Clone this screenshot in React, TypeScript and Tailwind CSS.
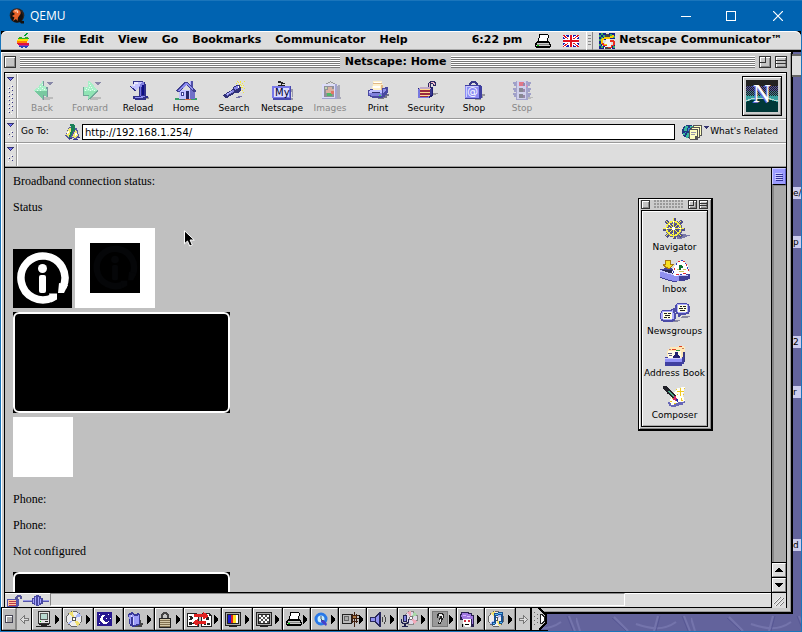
import type { ReactNode } from 'react';
import clsx from 'clsx';

const FACE = 'font-["DejaVu_Sans",sans-serif]';
const RAISED = 'border border-t-white border-l-white border-r-[#888] border-b-[#888]';

interface ArtProps {
  w: number;
  h: number;
  className?: string;
  children: ReactNode;
}

function Art({ w, h, className, children }: ArtProps) {
  return (
    <svg
      width={w}
      height={h}
      viewBox={`0 0 ${w} ${h}`}
      shapeRendering="crispEdges"
      aria-hidden="true"
      className={clsx('shrink-0', className)}
    >
      {children}
    </svg>
  );
}

/* ---------- host window ---------- */

function QemuLogo() {
  return (
    <svg width="16" height="16" viewBox="0 0 16 16" aria-hidden="true" className="shrink-0">
      <circle cx="8" cy="7.5" r="7.3" fill="#2a2422" />
      <circle cx="8" cy="8.5" r="6" fill="#14100f" />
      <path d="M10 13h5v2.500h-3z" fill="#14100f" />
      <path d="M3.500 4c1-2.500 4-3 5.500-2.500 2.500.6 3 2.500 2.500 4.500L9 9.500 8.500 13 7 11l-3 2 1.500-3.500L3 8l3-2z" fill="#e8622a" />
      <path d="M5 2.500l3-1 1 1.500-3 1z" fill="#ffb48c" />
      <circle cx="8.500" cy="4" r=".8" fill="#fff" />
    </svg>
  );
}

function HostTitleBar() {
  return (
    <header className="flex h-[31px] shrink-0 items-center border-t border-[#1a75bb] bg-[#0063b1] pl-[9px] text-white">
      <QemuLogo />
      <h1 className='ml-[5px] flex-1 font-["Open_Sans",sans-serif] text-xs'>QEMU</h1>
      <button type="button" aria-label="Minimize" className="flex h-full w-11 items-center justify-center">
        <Art w={10} h={10}><path d="M0 5h10v1H0z" fill="#fff" /></Art>
      </button>
      <button type="button" aria-label="Maximize" className="flex h-full w-[46px] items-center justify-center">
        <Art w={10} h={10}><path d="M.5.5h9v9h-9z" fill="none" stroke="#fff" /></Art>
      </button>
      <button type="button" aria-label="Close" className="flex h-full w-12 items-center justify-center">
        <svg width="10" height="10" viewBox="0 0 10 10" aria-hidden="true"><path d="M0 0l10 10M10 0L0 10" stroke="#fff" strokeWidth="1.2" /></svg>
      </button>
    </header>
  );
}

/* ---------- menu bar ---------- */

function AppleLogo() {
  return (
    <Art w={13} h={15}>
      <path d="M7 2h1V1h1V0h2v1h-1v1H9v1H7z" fill="#00a030" />
      <path d="M2 4h3v1h3V4h3v1h1v1H1V5h1z" fill="#30b020" />
      <path d="M1 6h10v2H0V7h1z" fill="#ffe000" />
      <path d="M0 8h10v2H0z" fill="#ff8000" />
      <path d="M0 10h12v2H1v-1H0z" fill="#e01040" />
      <path d="M1 12h11v1H2z" fill="#a030a0" />
      <path d="M2 13h9v1h-1v1H8v-1H6v1H4v-1H2z" fill="#2040c0" />
    </Art>
  );
}

function PrinterGlyph() {
  return (
    <Art w={16} h={14}>
      <path d="M4 0h9v1h1v3h-1v3h1v1h1v2h1v3h-1v1H1v-1H0V9h1V8h1V7h1V4h1z" />
      <path d="M5 1h8v3h-1v3H4V4h1z" fill="#fff" />
      <path d="M2 9h12v1H2zM1 11h14v1H1z" fill="#ccc" />
      <path d="M2 10h12v1H2z" fill="#888" />
      <path d="M2 11h2v1H2z" fill="#0c0" />
    </Art>
  );
}

function FlagGlyph() {
  return (
    <Art w={16} h={12}>
      <path d="M0 0h16v12H0z" fill="#1818b0" />
      <path d="M0 0l16 12M16 0L0 12" stroke="#fff" strokeWidth="3" />
      <path d="M0 0l16 12M16 0L0 12" stroke="#e01020" />
      <path d="M6 0h4v12H6zM0 4h16v4H0z" fill="#fff" />
      <path d="M7 0h2v12H7zM0 5h16v2H0z" fill="#e01020" />
    </Art>
  );
}

function CommunicatorGlyph() {
  return (
    <Art w={16} h={16}>
      <path d="M0 0h7v16H0zM10 0h6v6h-6zM13 12h3v4h-3z" fill="#102090" />
      <path d="M0 2h2v2H0zM2 0h2v2H2zM4 2h2v2H4zM2 4h2v2H2zM0 6h2v2H0zM0 11h2v2H0zM2 13h2v2H2zM11 1h2v2h-2zM14 3h2v2h-2zM14 13h2v2h-2z" fill="#38b060" />
      <path d="M3 7h10v6H3z" fill="#ddd" />
      <path d="M7 2h3v3h1l1 8 1 3H5l1-3 1-8z" fill="#f4f4f4" />
      <path d="M7 1h3v1h1v2H6V2h1zM6 14h6v2H6z" fill="#444" />
      <path d="M13 2h2v2h-1v1h-3v1H5v1H4v3h1v1h3v1H3v-1H2V6h1V5h2V4h6V3h2z" fill="#f8c800" />
      <path d="M11 7h4v1h1v4h-1v1h-2v2H9v-1h3v-2h2V9h-3z" fill="#e83020" />
      <path d="M3 10h2v2h3v1H4v-1H3z" fill="#e83020" />
    </Art>
  );
}

const menus = ['File', 'Edit', 'View', 'Go', 'Bookmarks', 'Communicator', 'Help'];

function MenuBar() {
  return (
    <nav className="flex h-[21px] shrink-0 items-center rounded-t-md border-b-2 border-black bg-[#ddd] text-[11px] font-bold shadow-[inset_0_1px_#fff,inset_0_-1px_#aaa]">
      <button type="button" aria-label="Apple menu" className="ml-4 mr-[13px]"><AppleLogo /></button>
      <ul className="flex flex-1 gap-[14px]">
        {menus.map((menu) => (
          <li key={menu}><button type="button">{menu}</button></li>
        ))}
      </ul>
      <time className="mr-[13px]">6:22 pm</time>
      <button type="button" aria-label="Desktop printer" className="mr-3"><PrinterGlyph /></button>
      <button type="button" aria-label="Keyboard layout"><FlagGlyph /></button>
      <span className="ml-[7px] mr-[6px] flex h-[18px] items-center border-l border-r border-l-white border-r-[#888] px-px">
        <span className="h-3 w-[3px] bg-[repeating-linear-gradient(to_bottom,#888_0_1px,transparent_1px_3px)]" />
      </span>
      <button type="button" className="mr-[19px] flex items-center gap-1">
        <CommunicatorGlyph />
        Netscape Communicator™
      </button>
    </nav>
  );
}

/* ---------- window furniture ---------- */

function WindowBox({ label, mark, small }: { label: string; mark?: 'zoom' | 'shade'; small?: boolean }) {
  const size = small ? 9 : 12;
  return (
    <button type="button" aria-label={label}>
      <Art w={size} h={size}>
        <path d={`M0 0h${size}v${size}H0z`} fill="#333" />
        <path d={`M1 1h${size - 2}v${size - 2}H1z`} fill="#fff" />
        <path d={`M2 2h${size - 3}v${size - 3}H2z`} fill="#888" />
        <path d={`M2 2h${size - 4}v${size - 4}H2z`} fill="#c4c4c4" />
        {mark === 'zoom' && <path d={small ? 'M5 1h1v5H1V5h4z' : 'M6 1h1v6H1V6h5z'} fill="#333" />}
        {mark === 'shade' && <path d={small ? 'M1 3h7v1H1zM1 5h7v1H1z' : 'M1 4h10v1H1zM1 7h10v1H1z'} fill="#333" />}
      </Art>
    </button>
  );
}

function Stripes({ className }: { className: string }) {
  return <span className={clsx('h-3 grow bg-[repeating-linear-gradient(to_bottom,#fff_0_1px,#777_1px_2px)]', className)} />;
}

function Grip() {
  return (
    <button
      type="button"
      aria-label="Collapse toolbar"
      className="flex w-3 shrink-0 flex-col items-center gap-1 border-r border-[#999] pt-[3px] pb-1"
    >
      <Art w={7} h={4}>
        <path d="M0 0h7v1H6v1H5v1H4v1H3V3H2V2H1V1H0z" fill="#333370" />
        <path d="M2 1h3v1H4v1H3V2H2z" fill="#7070ff" />
      </Art>
      <svg width="6" className="min-h-0 flex-1" aria-hidden="true" shapeRendering="crispEdges">
        <defs>
          <pattern id="grip" width="6" height="4" patternUnits="userSpaceOnUse">
            <path d="M3 0h1v1H3zM0 2h1v1H0z" fill="#fff" />
            <path d="M4 1h1v1H4zM1 3h1v1H1z" fill="#333380" />
          </pattern>
        </defs>
        <rect width="6" height="100%" fill="url(#grip)" />
      </svg>
    </button>
  );
}

/* ---------- toolbar icons ---------- */

function BackIcon() {
  return (
    <Art w={24} h={22}>
      <path d="M14 18h9v2h-3v1h-8z" fill="#bbb" />
      <path d="M12 2h2v5h2v2h2v9h-2v-1h-2v4h-1v-1h-1v-1h-1v-1h-1v-1H9v-1H8v-1H7v-1H6v-1H5v-1H4v-1h1v-1h1v-1h1V9h1V8h1V6h1V5h1V4h1z" fill="#a8f0c8" />
      <path d="M4 12h14v6h-2v-1h-2v4h-1v-1h-1v-1h-1v-1h-1v-1H9v-1H8v-1H7v-1H6v-1H5v-1H4z" fill="#78c8a0" />
      <path d="M13 2h1v5h-1zM16 8h2v10h-1v-8h-1zM13 16h1v5h-1z" fill="#7898a0" />
      <path d="M10 7h1v1h-1zM8 9h1v1H8zM12 9h1v1h-1zM10 11h1v1h-1zM7 11h1v1H7zM12 5h1v1h-1zM14 10h1v1h-1z" fill="#e4fff0" />
      <path d="M17 3h6v1h-1v1h-1v1h-2V5h-1V4h-1z" fill="#8888a8" />
    </Art>
  );
}

function ForwardIcon() {
  return (
    <Art w={24} h={22}>
      <path d="M14 18h9v2h-3v1h-9z" fill="#bbb" />
      <path d="M10 2h2v1h1v1h1v1h1v1h1v2h1v1h1v1h1v1h1v2h-1v1h-1v1h-1v1h-1v1h-1v1h-1v1h-1v1h-2v1h-1v-4H5V8h5z" fill="#a8f0c8" />
      <path d="M5 12h15v1h-1v1h-1v1h-1v1h-1v1h-1v1h-1v1h-1v1h-2v1h-1v-4H5z" fill="#90e4b4" />
      <path d="M19 11h1v2h-1v1h-1v1h-1v1h-1v1h-1v1h-1v1h-1v1h-2v1h-1v-1h1v-1h1v-1h1v-1h1v-1h1v-1h1v-1h1v-1h1v-1h1zM5 8h1v9H5zM5 16h6v1H5z" fill="#70a898" />
      <path d="M11 4h1v1h-1zM12 6h1v1h-1zM11 8h1v1h-1zM13 8h1v1h-1zM8 9h1v1H8zM10 10h1v1h-1zM14 10h1v1h-1zM7 11h1v1H7zM12 11h1v1h-1zM16 11h1v1h-1z" fill="#e4fff0" />
      <path d="M17 3h6v1h-1v1h-1v1h-2V5h-1V4h-1z" fill="#8888a8" />
    </Art>
  );
}

function ReloadIcon() {
  return (
    <Art w={24} h={22}>
      <path d="M9 18h14v2h-3v1H9z" fill="#999" />
      <path d="M7 2h10v1h2v2h1v12h2v2h-2v2H9v-1H7v-3h6V8l-3 4H9L3 7h4z" fill="#303088" />
      <path d="M8 3h8l-3 5-3 3-6-4h3z" fill="#c4c4ff" />
      <path d="M8 3h4v2H9v2H6l2-2z" fill="#e8e8ff" />
      <path d="M16 3h2v2l-3 3h-2z" fill="#8080e0" />
      <path d="M14 8h1v9h-1z" fill="#7070e8" />
      <path d="M8 18h7v-1h4v1h-2v1H9z" fill="#9090f4" />
      <path d="M16 6h2v10h-2z" fill="#0c0c88" />
    </Art>
  );
}

function HomeIcon() {
  return (
    <Art w={24} h={22}>
      <path d="M1 19h6v2H1zM17 19h6v2h-6z" fill="#38a068" />
      <path d="M6 20h6v1H6z" fill="#507070" />
      <path d="M16 2h3v7h-3z" fill="#5050a8" />
      <path d="M16 2h1v5h-1z" fill="#b4b4ff" />
      <path d="M5 11h12v9H5z" fill="#c4c4ff" />
      <path d="M16 10h5v10h-5z" fill="#7070c8" />
      <path d="M11 3h2l9 8v2h-2l-3-2-4-5-8 7H3v-1H2v-1z" fill="#404090" />
      <path d="M11 4h2l7 6-2 1-5-5-8 6H4z" fill="#8c8cf0" />
      <path d="M7 13h3v4H7z" fill="#404090" />
      <path d="M8 14h1v2H8z" fill="#fff" />
      <path d="M12 12h3v8h-3z" fill="#282868" />
      <path d="M11 20h6v1h-6z" fill="#e07040" />
    </Art>
  );
}

function SearchIcon() {
  return (
    <Art w={24} h={22}>
      <path d="M15 2h1v1h-1zM18 2h1v2h-1zM20 4h1v1h-1zM22 2h1v1h-1zM17 5h2v1h-2zM21 6h1v1h-1zM19 8h2v1h-2zM22 9h1v1h-1zM20 11h1v1h-1zM21 13h1v1h-1zM14 4h1v1h-1zM19 6h1v1h-1zM18 10h1v2h-1zM16 3h1v1h-1z" fill="#f4e838" />
      <path d="M17 4h1v1h-1zM20 7h1v1h-1zM19 12h1v1h-1z" fill="#fffcc0" />
      <path d="M14 18h2v-1h4v1h-2v1h-4z" fill="#7070a8" />
      <path d="M12 7l3-1h3v2h1v4l-3 2h-3l-8 5H3v-1H2v-1H1v-1l9-5z" fill="#303078" />
      <path d="M4 15l7-4 2 1-8 5z" fill="#8080d8" />
      <path d="M4 15l6-3v1l-5 3z" fill="#b4b4ff" />
      <path d="M12 8l4-1 1 2-4 2z" fill="#8888e8" />
      <path d="M16 7h1v2h-1z" fill="#fff" />
    </Art>
  );
}

function MyNetscapeIcon() {
  return (
    <Art w={24} h={22}>
      <path d="M8 2h3v1h2v1h2v1h-4V4H8zM11 5h1v2h-1zM8 6h3v1H8zM12 6h3v1h-3z" fill="#222" />
      <path d="M21 10h2v9H9v2h14z" fill="#99a" />
      <path d="M3 7h18v14H3z" fill="#4848b0" />
      <path d="M2 7h18v12H2z" fill="#7878e8" />
      <path d="M4 9h15v9H4z" fill="#dcdcff" />
      <text x="5" y="17" className='font-["DejaVu_Sans",sans-serif] text-[10px]' fill="#000030">My</text>
    </Art>
  );
}

function ImagesIcon() {
  return (
    <Art w={24} h={22}>
      <path d="M8 4h2V3h2V2h1v1h2v1h2v1h-2V4h-2V3h-1v1h-2v1H8z" fill="#999" />
      <path d="M17 7h3v-1h2v12h1v2H9v-1h8z" fill="#a8a8b8" />
      <path d="M4 5h15v15H4z" fill="#a4a4d0" />
      <path d="M4 5h13v14H4z" fill="#dcdcf8" />
      <path d="M6 7h10v11H6z" fill="#909098" />
      <path d="M10 8h4v2h2v4H8v-3h2z" fill="#d8b0a0" />
      <path d="M9 14h5v3H9z" fill="#50b868" />
      <path d="M13 12h3v3h-3z" fill="#e07868" />
      <path d="M7 8h2v2H7z" fill="#c0d8b0" />
    </Art>
  );
}

function PrintIcon() {
  return (
    <Art w={24} h={22}>
      <path d="M19 15h4v2h-2v2h-3v1h-6v-2h5z" fill="#778" />
      <path d="M7 2h9v3h1v6H6V7h1z" fill="#fff0c8" />
      <path d="M7 4h9v1H7zM15 6h2v5h-2z" fill="#e0b888" />
      <path d="M8 3h7v1H8zM7 7h7v2H7z" fill="#fff" />
      <path d="M4 10h3v1h9V9h3V8h3v6h-1v2h-2v2h-2v1H6v-1H4v-1H2v-6h2z" fill="#4848a0" />
      <path d="M4 11h12v3H3v-2h1z" fill="#c0c0ff" />
      <path d="M3 14h13v3H5v-1H3z" fill="#8080dc" />
      <path d="M17 10h3v1l-3 3z" fill="#9090e8" />
      <path d="M6 13h8v1H6z" fill="#303070" />
      <path d="M13 16h2v1h-2z" fill="#30e060" />
    </Art>
  );
}

function LockIcon() {
  return (
    <Art w={24} h={22}>
      <path d="M14 9V4h1V3h1V2h5v1h1v4h-3V5h-2v4z" fill="#282860" />
      <path d="M15 8V4h2V3h3v1h1v2h-1V5h-1V4h-3v4z" fill="#f0b8c8" />
      <path d="M18 14h6v1h-2v1h-4z" fill="#999" />
      <path d="M4 9h3V8h12v9h-1v1h-2v1H4z" fill="#202070" />
      <path d="M4 10h11v9H4z" fill="#7878e0" />
      <path d="M6 8h10v1h1v1H5V9h1z" fill="#c0a8c8" />
      <path d="M6 10h10v1H6zM6 13h10v1H6zM6 16h10v1H6z" fill="#ffd890" />
      <path d="M6 11h10v2H6zM6 14h10v2H6zM6 17h8v1H6z" fill="#982840" />
      <path d="M16 10h2v6h-2z" fill="#383890" />
    </Art>
  );
}

function ShopIcon() {
  return (
    <Art w={24} h={22}>
      <path d="M7 6V4h1V3h1V2h5v1h1v1h1v2h-2V5h-1V4h-3v1H9v1z" fill="#383888" />
      <path d="M20 15h3v2h-2v2h-2v2h-6v-2h6z" fill="#999" />
      <path d="M3 6h16v1h1v12h-1v1H3z" fill="#4040a0" />
      <path d="M3 7h14v12H3z" fill="#8c8cf4" />
      <path d="M4 7h12v1H4zM4 8h1v10H4z" fill="#ccf" />
      <text x="5" y="16" className='font-["DejaVu_Sans",sans-serif] text-[11px]' fill="#fff">@</text>
    </Art>
  );
}

function StopIcon() {
  return (
    <Art w={24} h={22}>
      <path d="M3 3h3v2h2v2H4V5H3zM3 9h3v2h2v2H4v-2H3zM3 14h3v2h2v2H4v-2H3zM16 5h2V3h3v2h-1v2h-4zM16 11h2V9h3v2h-1v2h-4zM16 16h2v-2h3v2h-1v2h-4z" fill="#a0a0c8" />
      <path d="M18 18h5v1h-2v1h-4z" fill="#bbb" />
      <path d="M6 2h12v19H6z" fill="#a4a4cc" />
      <path d="M7 2h9v18H7z" fill="#d0d0ec" />
      <path d="M9 3h5v4H9z" fill="#e07888" />
      <path d="M13 4h2v3h-2zM13 10h2v3h-2zM13 16h2v3h-2z" fill="#98a" />
      <path d="M9 9h4v4H9zM9 15h4v4H9z" fill="#888894" />
      <path d="M16 6h1v2h-1z" fill="#f080b0" />
    </Art>
  );
}

interface Tool {
  label: string;
  icon: ReactNode;
  disabled?: boolean;
}

const tools: Tool[] = [
  { label: 'Back', icon: <BackIcon />, disabled: true },
  { label: 'Forward', icon: <ForwardIcon />, disabled: true },
  { label: 'Reload', icon: <ReloadIcon /> },
  { label: 'Home', icon: <HomeIcon /> },
  { label: 'Search', icon: <SearchIcon /> },
  { label: 'Netscape', icon: <MyNetscapeIcon /> },
  { label: 'Images', icon: <ImagesIcon />, disabled: true },
  { label: 'Print', icon: <PrintIcon /> },
  { label: 'Security', icon: <LockIcon /> },
  { label: 'Shop', icon: <ShopIcon /> },
  { label: 'Stop', icon: <StopIcon />, disabled: true },
];

function NetscapeLogo() {
  return (
    <a
      href="#netscape"
      aria-label="Netscape"
      className="mr-1 flex size-10 shrink-0 items-center justify-center self-center border border-black bg-[#ccc] shadow-[inset_1px_1px_#fff,inset_-1px_-1px_#888]"
    >
      <svg width="32" height="32" viewBox="0 0 32 32" shapeRendering="crispEdges" aria-hidden="true">
        <defs>
          <pattern id="dither" width="2" height="2" patternUnits="userSpaceOnUse">
            <path d="M0 0h1v1H0zM1 1h1v1H1z" fill="#222" />
          </pattern>
        </defs>
        <path d="M0 0h32v32H0z" fill="#222" />
        <path d="M0 6h32v5H0z" fill="#5050a0" />
        <path d="M0 11h32v4H0z" fill="#407890" />
        <path d="M0 15h32v7H0z" fill="#38a0a0" />
        <path d="M0 6h32v10H0z" fill="url(#dither)" />
        <path d="M0 22l5-2 7-1h9l7 2 4 1v10H0z" fill="#003838" />
        <path d="M0 21l5-2 7-1h9l7 2 4 1" fill="none" stroke="#b8d8d0" />
        <text x="6" y="23" className='font-["Liberation_Serif",serif] text-[25px]' fill="#7870d8">N</text>
        <text x="7" y="22" className='font-["Liberation_Serif",serif] text-[25px]' fill="#fff">N</text>
      </svg>
    </a>
  );
}

function BookmarkIcon() {
  return (
    <Art w={16} h={16}>
      <path d="M1 12l4-9 8 1 2 8-3 3-4-1-3 2z" fill="#5858a0" />
      <path d="M2 11L5 4h2v6l-2 4zM8 13l2-4 2-4 2 6-3 3z" fill="#f0e870" />
      <path d="M4 7l1 1-1 3-1-1zM12 7l1 4-2 1z" fill="#fff" />
      <path d="M6 0h4v1h1v6H9v2H8v2H7v2H6v1H5v-3h1V8h1V2H6z" fill="#188058" />
      <path d="M5 14h3v1H5zM9 15h5v1H9zM14 13h2v1h-2z" fill="#333388" />
    </Art>
  );
}

function RelatedIcon() {
  return (
    <Art w={21} h={16}>
      <circle cx="7" cy="7.500" r="7" fill="#203880" />
      <path d="M3 2h3v2H5v3H2V4h1zM5 9h3v4H6v1H4v-3h1zM8 2h3v3H9V4H8zM1 9h2v2H1z" fill="#38b8a0" />
      <path d="M6 4h2v3H6zM3 8h1v1H3z" fill="#3888e0" />
      <path d="M11 1h9v11h-2v2h-2v2H8v-1H7V5h2V3h2z" fill="#555" />
      <path d="M12 2h7v9h-1V3h-6z" fill="#ffffc0" />
      <path d="M10 4h7v9h-1V5h-6z" fill="#ffffc0" />
      <path d="M8 6h7v6h-2v3H8z" fill="#ffffc0" />
      <path d="M9 8h5v1H9zM9 10h4v1H9z" fill="#99a" />
    </Art>
  );
}

function NavigationToolbar() {
  return (
    <div className="flex h-[46px] border-t border-b border-t-white border-b-[#999]">
      <Grip />
      <div className="flex flex-1 items-start border-l border-white pt-[5px]">
        {tools.map((tool) => (
          <button
            key={tool.label}
            type="button"
            disabled={tool.disabled}
            className={clsx('flex w-12 flex-col items-center text-[9px] leading-[14px]', tool.disabled && 'text-[#888]')}
          >
            {tool.icon}
            {tool.label}
          </button>
        ))}
      </div>
      <NetscapeLogo />
    </div>
  );
}

function LocationToolbar() {
  return (
    <div className="flex h-6 border-t border-b border-t-white border-b-[#999]">
      <Grip />
      <div className="flex flex-1 items-center border-l border-white pt-0.5 pl-[3px] text-[9px]">
        <label htmlFor="location" className="w-[43px]">Go To:</label>
        <BookmarkIcon />
        <input
          id="location"
          type="text"
          defaultValue="http://192.168.1.254/"
          className="ml-0.5 h-4 min-w-0 flex-1 border border-black bg-white px-0.5 text-[10px] outline-none"
        />
        <button type="button" className="ml-[7px] mr-2 flex items-center">
          <RelatedIcon />
          <Art w={5} h={3} className="mx-px mt-0.5 self-start"><path d="M0 0h5v1H4v1H3v1H2V2H1V1H0z" fill="#333370" /></Art>
          <span>What's Related</span>
        </button>
      </div>
    </div>
  );
}

/* ---------- page ---------- */

function InfoMark({ size, ring }: { size: number; ring: string }) {
  return (
    <svg width={size} height={size} viewBox="0 0 59 59" role="img" aria-label="Information">
      <path d="M0 0h59v59H0z" fill="#000" />
      <path d="M50 38A22 22 0 1 0 40 48.500" fill="none" stroke={ring} strokeWidth="7.500" />
      <path d="M46 34l9 2-4 8h-6zM36 44.500h8v6l-6 3z" fill={ring} />
      <circle cx="29.500" cy="19.500" r="4.500" fill={ring} />
      <rect x="26" y="26" width="7" height="18" rx="2" fill={ring} />
    </svg>
  );
}

function Panel() {
  return (
    <div className="h-[101px] w-[217px] bg-black">
      <div className="h-full rounded-md border-2 border-white bg-black" />
    </div>
  );
}

function RouterPage() {
  return (
    <main className='min-w-0 flex-1 overflow-hidden bg-[#c0c0c0] px-2 pt-[7px] font-["Liberation_Serif",serif] text-xs leading-[13px]'>
      <p className="mb-[13px]">Broadband connection status:</p>
      <p className="mb-[14px]">Status</p>
      <div className="mb-1 flex items-end gap-[3px]">
        <InfoMark size={59} ring="#fff" />
        <div className="size-20 bg-white p-[15px]">
          <InfoMark size={50} ring="#050608" />
        </div>
      </div>
      <Panel />
      <div className="mt-1 mb-4 size-[60px] bg-white" />
      <p className="mb-[13px]">Phone:</p>
      <p className="mb-[13px]">Phone:</p>
      <p className="mb-[14px]">Not configured</p>
      <Panel />
    </main>
  );
}

function ScrollBar() {
  return (
    <div className="flex w-[15px] shrink-0 flex-col border-l border-black bg-[#aaa]">
      <button type="button" aria-label="Scroll thumb" className="flex h-[17px] items-center justify-center border border-b-black border-t-[#ccf] border-l-[#ccf] border-r-[#66c] bg-[#9c9cff]">
        <Art w={8} h={8}>
          <path d="M0 0h7v1H0zM0 2h7v1H0zM0 4h7v1H0zM0 6h7v1H0z" fill="#ccf" />
          <path d="M1 1h7v1H1zM1 3h7v1H1zM1 5h7v1H1zM1 7h7v1H1z" fill="#333399" />
        </Art>
      </button>
      <div className="flex-1 border-l-2 border-t border-[#888]" />
      {['up', 'down'].map((dir) => (
        <div key={dir} className="border-t border-black">
          <button type="button" aria-label={`Scroll ${dir}`} className={clsx('flex h-[14px] w-full items-center justify-center bg-[#ddd]', RAISED)}>
            <Art w={8} h={4} className={dir === 'down' ? 'rotate-180' : ''}>
              <path d="M3 0h2v1h1v1h1v1h1v1H0V3h1V2h1V1h1z" />
            </Art>
          </button>
        </div>
      ))}
    </div>
  );
}

function StatusBar() {
  return (
    <footer className="flex h-4 shrink-0">
      <div className="flex flex-1 border-t border-b border-black bg-[#ddd] pl-0.5 shadow-[inset_0_1px_#fff]">
        <Art w={16} h={13} className="mt-px">
          <path d="M8 5V3h1V2h1V1h4v1h1v3h-2V3h-2v2z" fill="#555599" />
          <path d="M0 5h12v7h-1v1H0z" fill="#5555aa" />
          <path d="M1 6h8v6H1z" fill="#ffc8a0" />
          <path d="M2 7h7v1H2zM2 9h7v1H2zM2 11h7v1H2z" fill="#b83848" />
        </Art>
        <Art w={26} h={13} className="mt-px">
          <path d="M0 6h26v2H0z" fill="#5555aa" />
          <path d="M0 6h26v1H0z" fill="#9c9ce8" />
          <path d="M9 4h2V2h2V1h3v1h2v2h2v6h-2v1h-2v1h-3v-1h-2v-1H9z" fill="#4848a0" />
          <path d="M10 5h1v4h-1zM12 3h1v8h-1zM15 3h1v8h-1zM17 5h1v4h-1z" fill="#a4a4ff" />
        </Art>
        <div role="status" className="mb-px ml-px w-[575px] border border-t-[#888] border-l-[#888] border-r-white border-b-white" />
      </div>
      <button type="button" aria-label="Resize" className="flex w-[15px] items-center justify-center border-l border-t border-black bg-[#ddd]">
        <svg width="12" height="12" viewBox="0 0 12 12" aria-hidden="true">
          <path d="M1 9l7-7M3 11l8-8M7 11l4-4" stroke="#777" />
          <path d="M0 9l7-7M2 11l8-8M6 11l4-4" stroke="#fff" strokeWidth=".8" />
        </svg>
      </button>
    </footer>
  );
}

function BrowserWindow() {
  return (
    <section className="mb-[17px] flex min-w-0 flex-1 flex-col border-r-2 border-b-2 border-black bg-[#ccc] pr-1 pb-1 pl-[3px] shadow-[inset_1px_1px_#fff,inset_-1px_-1px_#999]">
      <div className="flex h-5 shrink-0 items-center gap-1">
        <WindowBox label="Close window" />
        <Stripes className="basis-4" />
        <h2 className="px-px text-[11px] font-bold">Netscape: Home</h2>
        <Stripes className="basis-0" />
        <WindowBox label="Zoom window" mark="zoom" />
        <WindowBox label="Collapse window" mark="shade" />
      </div>
      <div className="flex min-h-0 flex-1 flex-col border border-b-0 border-black">
        <div className="shrink-0 border-b border-black bg-[#ddd]">
          <NavigationToolbar />
          <LocationToolbar />
          <div className="flex h-6 border-t border-b border-t-white border-b-[#999]">
            <Grip />
            <div className="flex-1 border-l border-white" />
          </div>
        </div>
        <div className="flex min-h-0 flex-1">
          <RouterPage />
          <ScrollBar />
        </div>
        <StatusBar />
      </div>
    </section>
  );
}

/* ---------- component bar ---------- */

function WheelIcon() {
  return (
    <Art w={30} h={24}>
      <path d="M18 18h4v-1h4v1h4v1h-3v1h-2v1h-3v1h-5z" fill="#7878a8" />
      <path d="M14 1v21M3 12h22M6 4l16 16M22 4L6 20" stroke="#505088" strokeWidth="3" />
      <circle cx="14" cy="12" r="7" fill="none" stroke="#606090" strokeWidth="3" />
      <circle cx="13.500" cy="11.500" r="7" fill="none" stroke="#f8f040" strokeWidth="1.500" />
      <path d="M13.500 1v20M3 11.500h21M6 4l15 15M21 4L6 19" stroke="#f8f040" />
      <path d="M12 10h3v3h-3zM13 4h1v2h-1zM6 11h2v1H6zM9 7h1v1H9zM19 11h2v1h-2z" fill="#fff" />
    </Art>
  );
}

function InboxIcon() {
  return (
    <Art w={30} h={24}>
      <path d="M0 10h4V9h6l20 5v6h-2v1h-3v1h-8v1h-5v-1H8v-1H5v-1H2v-1H0z" fill="#404098" />
      <path d="M2 11h8l16 4-8 3h-5z" fill="#282850" />
      <path d="M0 12h2v1h3v1h3v1h4v1h4v1h3v5h-7v-1H8v-1H5v-1H2v-1H0z" fill="#9090f0" />
      <path d="M0 11h2v1h3v1h3v1h4v1h4v1h12v1H15v-1h-4v-1H7v-1H4v-1H0z" fill="#c8c8ff" />
      <path d="M12 13l3-7 4-4h5l4 5 2 8-8 1-8 1z" fill="#fff" />
      <path d="M18 2h2v1h-2zM23 2h2v1h-2zM26 5h1v2h-1zM28 10h1v2h-1zM14 9h1v2h-1zM16 15h3v1h-3zM23 14h3v1h-3z" fill="#e02838" />
      <path d="M21 1h2v1h-2zM16 4h1v2h-1zM27 8h1v2h-1zM13 12h1v2h-1zM20 15h2v1h-2zM25 4h1v1h-1z" fill="#3040c0" />
      <path d="M19 6h3v1h1v2h-2v2h-2z" fill="#107030" />
      <path d="M17 10h2v1h-2zM23 10h3v1h-3zM19 12h5v1h-5z" fill="#d0c860" />
      <path d="M5 1h6v4h3v1h-1v1h-1v1h-1v1h-1v1H7V9H5V8H4V7H3V5h2z" fill="#a87810" />
      <path d="M6 2h4v4h2v1h-1v1h-1v1H8V8H6V7H5V6h1z" fill="#f8e020" />
    </Art>
  );
}

function NewsIcon() {
  return (
    <Art w={30} h={24}>
      <path d="M12 19h8v1h-2v1h-6zM22 15h8v1h-2v1h-7z" fill="#8888a0" />
      <path d="M17 2h10v1h2v2h1v6h-1v2h-3v1h-5v1h-1v1h-2v-3h-2v-2h-1V4h1V3h1z" fill="#4c4ca8" />
      <path d="M17 3h10v1h1v7h-2v1h-8v-1h-1z" fill="#b0b0ff" />
      <path d="M2 9h9V8h2V7h2v5h1v6h-1v2h-2v1H3v-1H1v-2H0v-6h1v-2h1z" fill="#4c4ca8" />
      <path d="M2 10h10V9h1v3h1v6h-2v1H3v-1H1v-6h1z" fill="#b0b0ff" />
      <path d="M18 4h9v7h-9zM3 11h9v7H3z" fill="#ffffe0" />
      <path d="M20 5h2v1h-2zM23 5h3v1h-3zM19 7h4v1h-4zM24 7h2v1h-2zM20 9h5v1h-5zM4 12h3v1H4zM8 12h3v1H8zM5 14h5v1H5zM4 16h3v1H4zM8 16h2v1H8z" fill="#222" />
    </Art>
  );
}

function AddressIcon() {
  return (
    <Art w={22} h={24}>
      <path d="M19 7h2v12h-2v2h-2V9z" fill="#383880" />
      <path d="M3 8h1V6h2V4h8V3h6v1h1v5h-2v8H3z" fill="#ffe8b8" />
      <path d="M4 8h13v7H4z" fill="#fffce8" />
      <path d="M8 6h4v1H8zM15 3h3v1h-3z" fill="#e04020" />
      <path d="M12 7h4v1h-4z" fill="#309840" />
      <path d="M18 5h2v1h-2zM5 6h2v1H5z" fill="#c88060" />
      <path d="M4 10h4v1H4zM5 12h3v1H5z" fill="#555580" />
      <path d="M11 9h3v3h1v1h1v3H9v-3h1v-1h1z" fill="#202070" />
      <path d="M1 14h3v1h14v-1h2v7h-2v2H1z" fill="#4040a0" />
      <path d="M1 15h17v4H1z" fill="#9494f8" />
      <path d="M1 15h17v1H1z" fill="#ccf" />
    </Art>
  );
}

function ComposerIcon() {
  return (
    <Art w={24} h={24}>
      <path d="M5 17h2v1h5v-1h9v-2h1v3h-2v2h-4v1h-3v1H8v-1H6v-2H5z" fill="#6868b8" />
      <path d="M7 15l3-5 4-7 8-1-2 8 2 6-9 2-3 2H8z" fill="#fffff4" />
      <path d="M17 3h1v3h3v1h-3v4h-1V7h-3V6h3zM13 4h1v1h-1zM21 3h1v1h-1zM14 9h1v1h-1zM20 9h1v1h-1zM9 13h1v1H9zM7 16h2v1H7zM18 13h1v2h1v1h-2zM11 18h2v1h-2z" fill="#f0c820" />
      <path d="M0 1h4v1h1v1h1v1h1v1h1v1h1v1h1v1h1v1h1v1h1v4h-3v-1H9v-1H8v-1H7v-1H6v-1H5V9H4V7H3V6H2V5H1V4H0z" fill="#202028" />
      <path d="M5 6h2v1h1v1h1v1h1v1h1v2h-1v-1H9v-1H8V9H7V8H6V7H5z" fill="#50a888" />
      <path d="M11 11h2v2h1v3h-2v-1h-2v-2h1z" fill="#d02868" />
      <path d="M13 14h2v3h-1v-1h-1z" fill="#2828a0" />
    </Art>
  );
}

const components = [
  { label: 'Navigator', icon: <WheelIcon /> },
  { label: 'Inbox', icon: <InboxIcon /> },
  { label: 'Newsgroups', icon: <NewsIcon /> },
  { label: 'Address Book', icon: <AddressIcon /> },
  { label: 'Composer', icon: <ComposerIcon /> },
];

function ComponentBar() {
  return (
    <aside className="absolute top-[146px] right-[88px] w-[75px] border border-r-2 border-b-2 border-black bg-[#ccc] pr-[3px] pb-0.5 pl-0.5 shadow-[inset_1px_1px_#fff,inset_-1px_-1px_#888]">
      <div className="flex h-[11px] items-center gap-0.5">
        <WindowBox label="Close palette" small />
        <span className="mx-0.5 h-[9px] flex-1 bg-[radial-gradient(circle_at_1px_1px,#999_1px,transparent_1px)] bg-[size:3px_3px]" />
        <WindowBox label="Zoom palette" mark="zoom" small />
        <WindowBox label="Collapse palette" mark="shade" small />
      </div>
      <div className="flex flex-col gap-[6px] border border-black bg-[#ddd] pt-[6px] pb-[5px] shadow-[inset_1px_1px_#fff,inset_-1px_-1px_#aaa]">
        {components.map((item) => (
          <button key={item.label} type="button" className="flex flex-col items-center text-[9px] leading-3 whitespace-nowrap">
            {item.icon}
            {item.label}
          </button>
        ))}
      </div>
    </aside>
  );
}

/* ---------- control strip ---------- */

const disc = (
  <>
    <circle cx="8" cy="8" r="7.500" fill="#eee" stroke="#666" />
    <path d="M8 8L3 2l4-2zM8 8l6 4-3 3z" fill="#f0e070" />
    <path d="M8 8L2 12l1 2zM8 8l4-6 3 3z" fill="#a8b8f8" />
    <circle cx="8" cy="8" r="2" fill="#fff" stroke="#555" />
  </>
);

const stripModules: { label: string; width: string; icon: ReactNode }[] = [
  {
    label: 'File sharing',
    width: 'w-[31px]',
    icon: (
      <Art w={17} h={18}>
        <path d="M3 1h12v13H3z" fill="#333" />
        <path d="M4 2h10v11H4z" fill="#e4e4e4" />
        <path d="M5 3h8v7H5z" fill="#555" />
        <path d="M6 4h6v5H6z" fill="#b8d8d0" />
        <path d="M10 11h3v1h-3zM4 14h10v1H4zM1 16h5v-1h6v1h4v1H1z" fill="#222" />
        <path d="M5 11h1v1H5z" fill="#0b0" />
      </Art>
    ),
  },
  { label: 'CD', width: 'w-[31px]', icon: <Art w={16} h={16}>{disc}</Art> },
  {
    label: 'Energy saver',
    width: 'w-[30px]',
    icon: (
      <Art w={15} h={14}>
        <path d="M0 0h15v14H0z" fill="#281890" />
        <path d="M5 3h3v1H7v1H6v3h1v1h1v1h3V9h1v1h-1v1h-1v1H6v-1H5v-1H4V9H3V6h1V4h1z" fill="#fff" />
        <path d="M2 2h1v1H2zM11 2h1v1h-1zM9 6h1v1H9zM2 11h1v1H2zM13 6h1v1h-1z" fill="#fff" />
      </Art>
    ),
  },
  {
    label: 'Folders',
    width: 'w-[31px]',
    icon: (
      <Art w={17} h={17}>
        <path d="M12 9h2v3h2v2h-1v2H8v-2h5z" fill="#444" />
        <path d="M1 3h1V2h2V1h2v1h1v1h3V2h2v1h1v11h-2v1H8v1H5v-1H3v-2H2V6H1z" fill="#383898" />
        <path d="M2 4h2v9H3V8H2zM5 3h1v1h1v1h4V4h1v9H9v1H6V6H5z" fill="#9c9cf8" />
        <path d="M6 6h1v8H6zM4 4h1v2H4z" fill="#d4d4ff" />
      </Art>
    ),
  },
  {
    label: 'Security',
    width: 'w-[29px]',
    icon: (
      <Art w={14} h={17}>
        <path d="M3 8V3h1V2h1V1h4v1h1v1h1v5H9V4H8V3H6v1H5v4z" fill="#444" />
        <path d="M1 7h12v10H1z" fill="#222" />
        <path d="M2 8h10v8H2z" fill="#d4c8a8" />
        <path d="M2 9h10v1H2zM2 11h10v1H2zM2 13h10v1H2zM2 15h10v1H2z" fill="#807050" />
      </Art>
    ),
  },
  {
    label: 'File exchange',
    width: 'w-[38px]',
    icon: (
      <Art w={26} h={15}>
        <path d="M0 1h10v1h2v13H0zM15 1h8v1h1v1h1v12H14V2h1z" fill="#222" />
        <path d="M1 2h8v2h2v10H1zM15 2h7v2h2v10h-9z" fill="#fff" />
        <path d="M2 4h3v1h1v2H5v1H2V7h1V5H2zM2 10h3v3H2zM4 11h4v1H4zM19 5h3v3h-3zM20 11h3v2h-3zM17 12h2v1h-2z" fill="#222" />
        <path d="M7 2h9V0h1v1h2v1h1v1h1v2h-1v1h-2v1h-2V5H7zM19 9h-8V7h-1v1H8v1H7v1H6v1h1v1h1v1h2v1h1v-2h8z" fill="#e02020" />
      </Art>
    ),
  },
  {
    label: 'Monitor colors',
    width: 'w-[31px]',
    icon: (
      <Art w={16} h={15}>
        <path d="M0 0h16v14H0zM4 14h8v1H4z" fill="#222" />
        <path d="M1 1h14v12H1z" fill="#aaa" />
        <path d="M2 2h12v10H2z" fill="#222" />
        <path d="M3 3h3v8H3z" fill="#1818d0" />
        <path d="M6 3h2v8H6z" fill="#e02020" />
        <path d="M8 3h3v8H8z" fill="#ffe020" />
        <path d="M11 3h2v8h-2z" fill="#fff" />
      </Art>
    ),
  },
  {
    label: 'Monitor resolution',
    width: 'w-[30px]',
    icon: (
      <Art w={16} h={15}>
        <path d="M0 0h16v14H0zM4 14h8v1H4z" fill="#222" />
        <path d="M1 1h14v12H1z" fill="#aaa" />
        <path d="M2 2h12v10H2z" fill="#222" />
        <path d="M3 3h10v8H3z" fill="#fff" />
        <path d="M5 3h2v2H5zM9 3h2v2H9zM3 5h2v2H3zM7 5h2v2H7zM11 5h2v2h-2zM5 7h2v2H5zM9 7h2v2H9zM3 9h2v2H3zM7 9h2v2H7zM11 9h2v2h-2z" fill="#555" />
      </Art>
    ),
  },
  { label: 'Printer', width: 'w-7', icon: <PrinterGlyph /> },
  {
    label: 'QuickTime',
    width: 'w-7',
    icon: (
      <svg width="14" height="14" viewBox="0 0 14 14" aria-hidden="true">
        <circle cx="7" cy="7" r="5" fill="#c8ecfc" stroke="#2878e8" strokeWidth="3" />
        <path d="M7 8h3l3 4-1 2-5-4z" fill="#4840c8" />
        <path d="M7 4v3l2 2" stroke="#456" fill="none" />
      </svg>
    ),
  },
  {
    label: 'Remote access',
    width: 'w-7',
    icon: (
      <Art w={17} h={15}>
        <path d="M0 2h10v10H0z" fill="#222" />
        <path d="M1 3h8v8H1z" fill="#bbb" />
        <path d="M2 4h5v5H2z" fill="#666" />
        <path d="M3 5h3v3H3z" fill="#aaa" />
        <path d="M12 0h1v15h-1zM9 3h8v1H9zM9 6h8v1H9zM10 9h6v1h-6zM10 2h1v9h-1zM14 2h1v9h-1z" fill="#402010" />
        <path d="M11 4h3v2h-3z" fill="#b07840" />
      </Art>
    ),
  },
  {
    label: 'Sound volume',
    width: 'w-[31px]',
    icon: (
      <Art w={17} h={15}>
        <path d="M0 5h5V4h1V3h1V2h1V1h1V0h2v15H9v-1H8v-1H7v-1H6v-1H5v-1H0z" fill="#28285c" />
        <path d="M1 6h4v3H1zM6 5h1V4h1V3h1v9H8v-1H7v-1H6z" fill="#9090f0" />
        <path d="M12 5h1v5h-1zM14 3h1v2h1v5h-1v2h-1v-2h1V5h-1z" fill="#444" />
      </Art>
    ),
  },
  {
    label: 'Sound input',
    width: 'w-[31px]',
    icon: (
      <Art w={17} h={16}>
        <circle cx="10" cy="7" r="6.500" fill="#e0d8e8" stroke="#888" />
        <path d="M10 7L6 1l4-1zM10 7l6 3-3 3z" fill="#f0a8b8" />
        <path d="M10 7l3-6 3 3z" fill="#a8d8a8" />
        <circle cx="10" cy="7" r="1.500" fill="#fff" stroke="#777" />
        <path d="M2 4h4v7H2z" fill="#222250" />
        <path d="M3 5h2v5H3z" fill="#8080e0" />
        <path d="M0 8h1v3h1v1h4v-1h1V8h1v4H7v1H5v2h2v1H1v-1h2v-2H1v-1H0z" fill="#222250" />
      </Art>
    ),
  },
  {
    label: 'Speech',
    width: 'w-7',
    icon: (
      <Art w={16} h={16}>
        <path d="M0 0h16v16H0z" fill="#777" />
        <path d="M1 1h14v14H1z" fill="#999" />
        <path d="M5 3h1V2h5v1h1v4h-1v2h-1v2H9v2H6v-2h2V9H7V7h1V5H6v2H5z" fill="#222" />
        <path d="M7 3h3v1h1v3h-1V5H7zM8 8h1v3H7v1h1v-2z" fill="#eee" />
      </Art>
    ),
  },
  {
    label: 'Desktop characters',
    width: 'w-7',
    icon: (
      <Art w={15} h={16}>
        <path d="M1 1h8v1h3v2h2v12h-3v-4H3V9H0V3h1z" fill="#282050" />
        <path d="M2 2h6v1h3v2h2v8h-1V8H2V6H1V4h1z" fill="#a078e0" />
        <path d="M3 4h3v1H3zM7 5h3v1H7z" fill="#d8b8ff" />
        <path d="M3 8h8v7h-1v1H5v-1H4v-2H3z" fill="#fff" />
        <path d="M4 9h2v2H4zM8 9h2v2H8z" fill="#d03040" />
        <path d="M5 13h4v1H5zM2 13h1v3H2z" />
      </Art>
    ),
  },
  {
    label: 'iTunes',
    width: 'w-[31px]',
    icon: (
      <Art w={16} h={16}>
        {disc}
        <path d="M6 2h4V1h5v11h-1v1h-3v-3h2V4h-3v1H8v8H7v1H4v-3h2z" fill="#185090" />
        <path d="M7 3h3V2h4v1h-4v1H7zM5 12h2v1H5zM12 11h2v1h-2z" fill="#58b8f0" />
      </Art>
    ),
  },
];

function ControlStrip() {
  return (
    <div role="toolbar" aria-label="Control Strip" className="absolute bottom-0 left-0 flex h-6 max-w-full border-t border-b border-l border-black">
      <button type="button" aria-label="Close strip" className={clsx('flex w-[14px] items-center justify-center bg-[#bbb]', RAISED)}>
        <Art w={8} h={8}>
          <path d="M0 0h8v8H0z" fill="#445" />
          <path d="M1 1h6v6H1z" fill="#fff" />
          <path d="M2 2h5v5H2z" fill="#aaa" />
        </Art>
      </button>
      <button type="button" aria-label="Previous modules" className="flex w-[15px] items-center justify-center border-l border-[#888] bg-[#ccc]">
        <Art w={9} h={9}>
          <path d="M4 0h1v3h4v3H5v3H4V8H3V7H2V6H1V5H0V4h1V3h1V2h1V1h1z" fill="#777" />
          <path d="M4 2v2h4v1H4v2H3V6H2V5H1V4h1V3h1V2z" fill="#ddd" />
        </Art>
      </button>
      {stripModules.map((module) => (
        <div key={module.label} className={clsx('border-l border-black', module.width)}>
          <button type="button" aria-label={module.label} className={clsx('flex h-full w-full items-center justify-between bg-[#c4c4c4] pr-0.5 pl-0.5', RAISED)}>
            {module.icon}
            <Art w={4} h={9}><path d="M0 0h1v1h1v1h1v1h1v3H3v1H2v1H1v1H0z" /></Art>
          </button>
        </div>
      ))}
      <button type="button" aria-label="Next modules" className="flex w-[15px] items-center justify-center border-l border-black bg-[#ccc]">
        <Art w={9} h={9} className="rotate-180">
          <path d="M4 0h1v3h4v3H5v3H4V8H3V7H2V6H1V5H0V4h1V3h1V2h1V1h1z" fill="#777" />
          <path d="M4 2v2h4v1H4v2H3V6H2V5H1V4h1V3h1V2z" fill="#ddd" />
        </Art>
      </button>
      <button type="button" aria-label="Resize strip">
        <Art w={18} h={22}>
          <path d="M0 0h2v22H0z" />
          <path d="M2 0h7l7 7v8l-7 7H2z" fill="#ccc" />
          <path d="M9 0l7 7v8l-7 7" fill="none" stroke="#000" strokeWidth="2" />
          <path d="M4 4h1v1H4zM7 6h1v1H7zM4 8h1v1H4zM7 10h1v1H7zM4 12h1v1H4zM7 14h1v1H7zM4 16h1v1H4z" fill="#666" />
          <path d="M10 6h3v1h1v1h1v6h-1v1h-1v1h-3z" fill="#222" />
          <path d="M11 7h1v1h1v1h1v4h-1v1h-1v1h-1z" fill="#fff" />
        </Art>
      </button>
    </div>
  );
}

/* ---------- desktop ---------- */

const desktopLabels = [
  { text: 'e/', top: 'top-[135px]' },
  { text: 'p', top: 'top-[184px]' },
  { text: '2', top: 'top-[284px]' },
  { text: 'r', top: 'top-[334px]' },
  { text: 'd', top: 'top-[487px]' },
];

function Wallpaper() {
  return (
    <svg className="absolute bottom-0 left-0 h-[17px] w-full" aria-hidden="true">
      <defs>
        <pattern id="tile" width="115" height="17" patternUnits="userSpaceOnUse">
          <path d="M108 2l6 15M0 4l4 13M38 3l14 14M100 8c-14 10-28 6-40 2M82 2l-4 15" fill="none" stroke="#7474ac" strokeWidth="2" />
          <path d="M106 2l6 15M36 4l14 13M84 2l-4 15" fill="none" stroke="#565694" />
        </pattern>
      </defs>
      <rect width="100%" height="17" fill="url(#tile)" />
    </svg>
  );
}

export default function App() {
  return (
    <div className={clsx('flex h-screen flex-col overflow-hidden bg-black text-black', FACE)}>
      <HostTitleBar />
      <div className="flex min-h-0 flex-1 flex-col border-r border-b border-l border-[#1a75bb]">
        <MenuBar />
        <div className="relative flex min-h-0 flex-1 overflow-hidden bg-[#63639c] pr-2">
          <Wallpaper />
          <div className="absolute top-0.5 right-0 h-[23px] w-[9px] border-y-2 border-[#666] bg-[#ddd]" />
          {desktopLabels.map((label) => (
            <span key={label.text} className={clsx('absolute right-0 h-3 w-[8px] overflow-hidden bg-[#ccccee] text-[9px] leading-3', label.top)}>
              {label.text}
            </span>
          ))}
          <BrowserWindow />
          <ComponentBar />
          <ControlStrip />
          <svg width="12" height="17" viewBox="0 0 12 17" aria-hidden="true" className="absolute top-[178px] left-[183px]">
            <path d="M.5.8v13l3-2.800 2.200 5 2.600-1-2.200-5h4.200z" fill="#000" stroke="#fff" />
          </svg>
        </div>
      </div>
    </div>
  );
}
